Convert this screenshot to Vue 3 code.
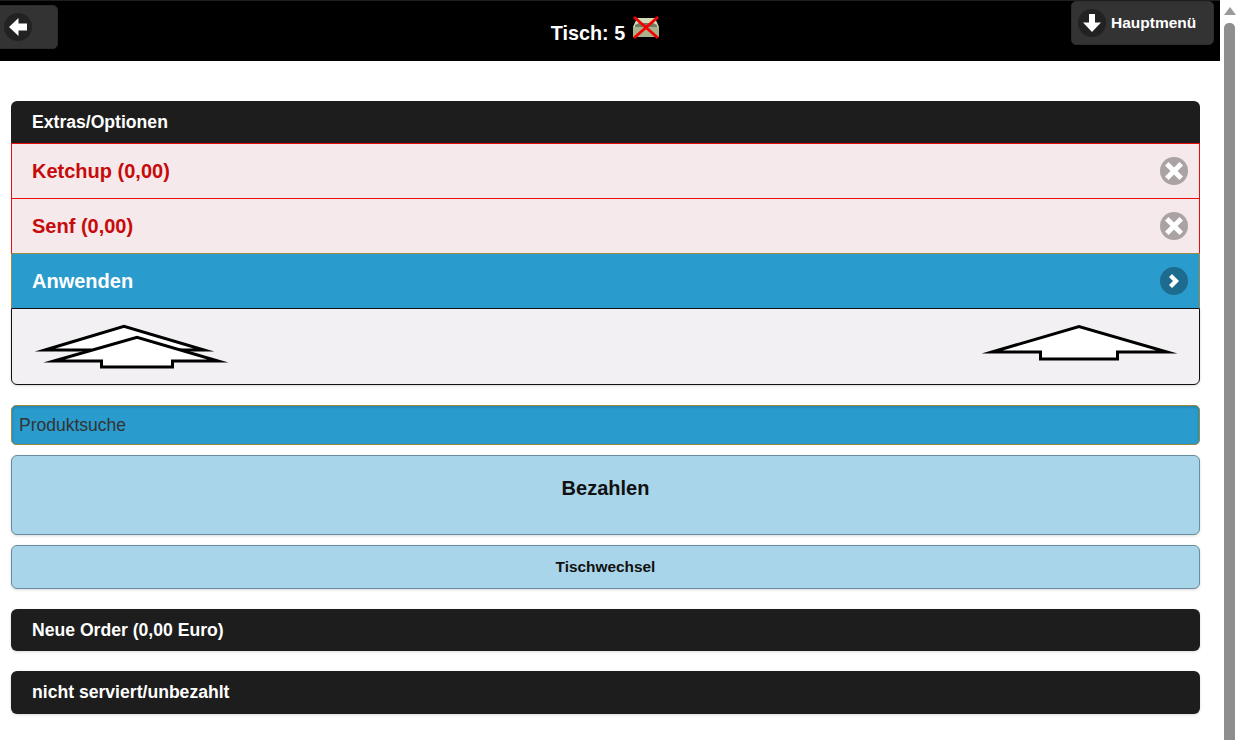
<template>
  <div class="screen">
    <div class="page">
      <header class="topbar">
        <a class="head-btn back-btn">
          <span class="head-ico">
            <svg width="28" height="28" viewBox="0 0 28 28">
              <path d="M14.5 5 L5 14 L14.5 23 L14.5 17.5 L23 17.5 L23 10.5 L14.5 10.5 Z" fill="#fff" />
            </svg>
          </span>
        </a>
        <h1 class="title">
          Tisch: 5
          <svg class="table-ico" width="28" height="24" viewBox="0 0 28 24">
            <path d="M5 2 L23 2 L27 11 L1 11 Z" fill="#d3dbb8" />
            <path d="M1 11 L27 11 L27 21 L1 21 Z" fill="#a8b28b" />
            <path d="M3 9 L7 7 L21 7 L25 9 L25 11 L3 11 Z" fill="#737c63" />
            <path d="M2 1 L26 22 M26 1 L2 22" stroke="#f40000" stroke-width="2.8" />
          </svg>
        </h1>
        <a class="head-btn menu-btn">
          <span class="head-ico">
            <svg width="28" height="28" viewBox="0 0 28 28">
              <path d="M5 13.5 L14 23 L23 13.5 L17 13.5 L17 5 L11 5 L11 13.5 Z" fill="#fff" />
            </svg>
          </span>
          Hauptmenü
        </a>
      </header>

      <main class="content">
        <section class="extras">
          <div class="bar extras-head">Extras/Optionen</div>
          <div v-for="opt in optionen" :key="opt" class="row row-off">
            {{ opt }}
            <span class="row-ico">
              <svg width="28" height="28" viewBox="0 0 28 28">
                <path d="M8.5 5 L14 10.5 L19.5 5 L23 8.5 L17.5 14 L23 19.5 L19.5 23 L14 17.5 L8.5 23 L5 19.5 L10.5 14 L5 8.5 Z" fill="#fff" />
              </svg>
            </span>
          </div>
          <div class="row row-apply">
            Anwenden
            <span class="row-ico">
              <svg width="28" height="28" viewBox="0 0 28 28">
                <path d="M12 7 L19 14 L12 21 L9 18 L13 14 L9 10 Z" fill="#fff" />
              </svg>
            </span>
          </div>
          <div class="arrows">
            <svg width="204" height="50" viewBox="0 0 204 50">
              <path d="M15 28 L94 4.4 L174 28 L130 28 L130 35 L60 35 L60 28 Z" class="arrow" />
              <path d="M24 39 L107 15.4 L188 39 L142.5 39 L142.5 45 L71.5 45 L71.5 39 Z" class="arrow" />
            </svg>
            <svg width="204" height="42" viewBox="0 0 204 42">
              <path d="M17 30 L104 4.6 L192 30 L142.5 30 L142.5 37 L65.5 37 L65.5 30 Z" class="arrow" />
            </svg>
          </div>
        </section>

        <input class="search" type="text" placeholder="Produktsuche" />
        <button class="action action-pay">Bezahlen</button>
        <button class="action action-switch">Tischwechsel</button>

        <div class="bar order">Neue Order (0,00 Euro)</div>
        <div class="bar open">nicht serviert/unbezahlt</div>
      </main>
    </div>

    <div class="scrollbar">
      <span class="scroll-up"></span>
      <span class="scroll-thumb"></span>
    </div>
  </div>
</template>

<script setup>
const optionen = ['Ketchup (0,00)', 'Senf (0,00)']
</script>

<style>
html, body {
  margin: 0;
  height: 100%;
  overflow: hidden;
  background: #fff;
}
</style>

<style scoped>
.screen {
  display: flex;
  width: 1237px;
  height: 740px;
  overflow: hidden;
  font-family: "Liberation Sans", Arial, sans-serif;
  font-weight: bold;
}

.page {
  flex: 1;
  min-width: 0;
}

.scrollbar {
  width: 17px;
  flex: none;
  padding: 7px 2px 0 4px;
  box-sizing: border-box;
  background: #fff;
  display: flex;
  flex-direction: column;
  align-items: stretch;
}

.scroll-up {
  align-self: center;
  width: 0;
  height: 0;
  border-left: 6px solid transparent;
  border-right: 6px solid transparent;
  border-bottom: 8px solid #9a9a9a;
  margin-bottom: 8px;
}

.scroll-thumb {
  flex: 1;
  background: #8e8e8e;
  border-radius: 5px 5px 0 0;
}

.topbar {
  display: grid;
  grid-template-columns: 1fr auto 1fr;
  height: 61px;
  box-sizing: border-box;
  background: #000;
  border-top: 1px solid #1e1e1e;
}

.head-btn {
  display: flex;
  align-items: center;
  box-sizing: border-box;
  height: 44px;
  background: #333;
  border: 1px solid #2c2c2c;
  border-radius: 5px;
  color: #fff;
  font-size: 15.5px;
}

.back-btn {
  justify-self: start;
  width: 63px;
  margin: 4px 0 0 -5px;
  padding-left: 8px;
}

.menu-btn {
  justify-self: end;
  width: 143px;
  margin: 0 6px 0 0;
  padding-left: 6px;
  gap: 5px;
}

.head-ico {
  display: block;
  width: 28px;
  height: 28px;
  border-radius: 50%;
  background: #222;
}

.head-ico svg,
.row-ico svg {
  display: block;
}

.title {
  display: flex;
  align-items: flex-start;
  gap: 7px;
  margin: 20px 9px 0 0;
  font-size: 19.8px;
  line-height: 24px;
  color: #fff;
}

.table-ico {
  margin-top: -5px;
}

.content {
  padding: 40px 20px 0 11px;
}

.extras {
  display: flex;
  flex-direction: column;
  margin-bottom: 20px;
}

.bar {
  display: flex;
  align-items: center;
  box-sizing: border-box;
  padding-left: 21px;
  background: #1d1d1d;
  border-radius: 6px;
  color: #fff;
  font-size: 17.6px;
  box-shadow: 0 1px 3px rgba(0, 0, 0, 0.15);
}

.extras-head {
  height: 42px;
  border-radius: 6px 6px 0 0;
  box-shadow: none;
}

.row {
  position: relative;
  display: flex;
  align-items: center;
  box-sizing: border-box;
  height: 55px;
  padding-left: 20px;
  font-size: 20px;
  border-style: solid;
  border-width: 1px 1px 0;
}

.row-off {
  background: #f5e9eb;
  border-color: #e80c0c;
  color: #c70a0a;
}

.row-apply {
  background: #2a9bcd;
  border-color: #9a8a44;
  color: #fff;
}

.row-ico {
  position: absolute;
  right: 11px;
  top: 50%;
  margin-top: -14px;
  width: 28px;
  height: 28px;
  border-radius: 50%;
  background: rgba(0, 0, 0, 0.3);
}

.arrows {
  display: flex;
  justify-content: space-between;
  box-sizing: border-box;
  height: 77px;
  padding: 13px 20px 0 18px;
  background: #f2f0f3;
  border: 1px solid #111;
  border-radius: 0 0 6px 6px;
  box-shadow: 0 1px 3px rgba(0, 0, 0, 0.15);
}

.arrow {
  fill: #fff;
  stroke: #000;
  stroke-width: 3;
  stroke-linejoin: miter;
  stroke-miterlimit: 8;
}

.search {
  display: block;
  width: 100%;
  height: 40px;
  box-sizing: border-box;
  margin: 0 0 10px;
  padding: 0 7px;
  background: #2a9bcd;
  border: 1px solid #9a8a44;
  border-radius: 5px;
  box-shadow: inset 0 1px 3px rgba(0, 0, 0, 0.2);
  color: #333;
  font-family: "Liberation Sans", Arial, sans-serif;
  font-size: 17.5px;
  outline: none;
}

.search::placeholder {
  color: #333;
  opacity: 1;
}

.action {
  display: block;
  width: 100%;
  box-sizing: border-box;
  margin: 0 0 10px;
  background: #a8d5e9;
  border: 1px solid #688d9c;
  border-radius: 6px;
  box-shadow: 0 1px 3px rgba(0, 0, 0, 0.15);
  color: #111;
  font-family: "Liberation Sans", Arial, sans-serif;
  font-weight: bold;
}

.action-pay {
  height: 80px;
  padding: 0 0 14px;
  font-size: 20px;
}

.action-switch {
  height: 44px;
  font-size: 15.4px;
}

.order {
  height: 42px;
  margin: 20px 0;
}

.open {
  height: 43px;
}
</style>
